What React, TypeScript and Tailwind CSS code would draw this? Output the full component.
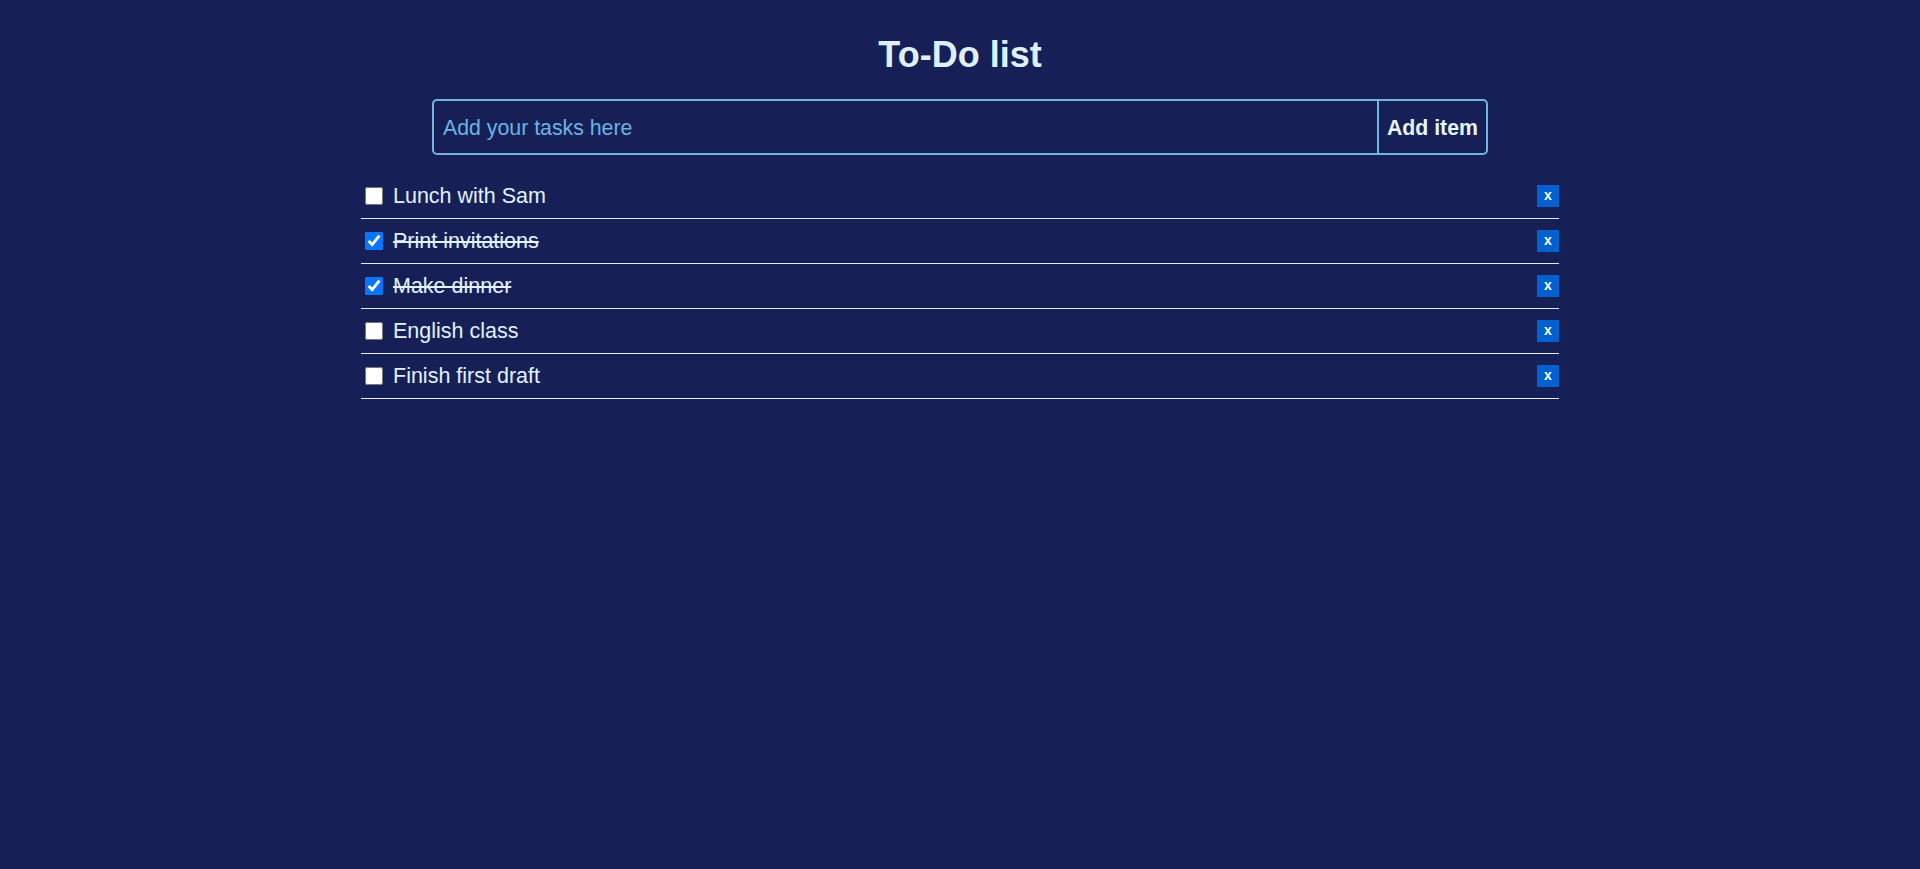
import { useState } from "react";

type Task = { id: number; text: string; done: boolean };

const initialTasks: Task[] = [
  { id: 1, text: "Lunch with Sam", done: false },
  { id: 2, text: "Print invitations", done: true },
  { id: 3, text: "Make dinner", done: true },
  { id: 4, text: "English class", done: false },
  { id: 5, text: "Finish first draft", done: false },
];

const App = () => {
  const [tasks, setTasks] = useState<Task[]>(initialTasks);
  const [draft, setDraft] = useState("");

  const addTask = () => {
    if (!draft.trim()) return;
    setTasks([...tasks, { id: Date.now(), text: draft.trim(), done: false }]);
    setDraft("");
  };

  const toggle = (id: number) =>
    setTasks(tasks.map((t) => (t.id === id ? { ...t, done: !t.done } : t)));

  const remove = (id: number) => setTasks(tasks.filter((t) => t.id !== id));

  return (
    <main className="min-h-screen bg-[#162057] font-['Liberation_Sans',Arial,sans-serif] text-[#e2f2ff]">
      <h1 className="pt-[34px] text-center text-[36px] font-bold leading-[41px] text-[#dff0fc]">
        To-Do list
      </h1>

      <form
        onSubmit={(e) => {
          e.preventDefault();
          addTask();
        }}
        className="mx-auto mt-[24px] flex h-[56px] w-[1056px] rounded-[5px] border-2 border-[#72b4e0]"
      >
        <input
          value={draft}
          onChange={(e) => setDraft(e.target.value)}
          placeholder="Add your tasks here"
          className="min-w-0 flex-1 bg-transparent pl-[9px] pt-[4px] text-[21.3px] text-[#e2f2ff] outline-none placeholder:text-[#6cb2e4]"
        />
        <button
          type="submit"
          className="border-l-2 border-[#72b4e0] px-[8px] pt-[3px] text-[21.3px] font-bold text-[#e8f4ff]"
        >
          Add item
        </button>
      </form>

      <ul className="mx-auto mt-[19px] w-[1198px]">
        {tasks.map((task) => (
          <li
            key={task.id}
            className="flex h-[45px] items-center border-b border-[#e4ecf8]"
          >
            <input
              type="checkbox"
              checked={task.done}
              onChange={() => toggle(task.id)}
              className="ml-[4px] mr-[10px] h-[18px] w-[18px] accent-[#0a75ff]"
            />
            <span
              className={`mt-[2px] text-[21.5px] leading-none ${task.done ? "line-through" : ""}`}
            >
              {task.text}
            </span>
            <button
              onClick={() => remove(task.id)}
              className="ml-auto flex h-[22px] w-[22px] items-center justify-center bg-[#0360cf] pb-[2px] text-[14px] font-bold text-white"
            >
              x
            </button>
          </li>
        ))}
      </ul>
    </main>
  );
};

export default App;
